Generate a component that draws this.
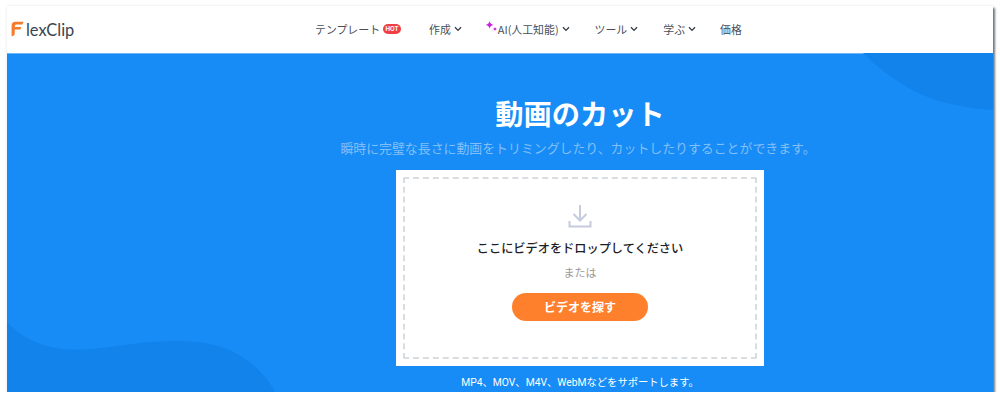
<div class="window">
  <header class="top">
    <div class="logo">
      <svg class="logo-mark" viewBox="0 0 13 16" width="13" height="16" aria-hidden="true">
        <path d="M4.5 0.8H12.6L11.4 3.6H5.6C4.6 3.6 4 4.2 3.9 5L3.8 6H10.4L9.4 8.6H3.7V12.6C3.7 14.4 2.4 15.2 0.6 15.2V4.8C0.6 2.2 2 0.8 4.5 0.8Z" fill="#f47a2c"/>
      </svg>
      <span class="logo-text">lexClip</span>
    </div>
    <nav class="nav">
      <span class="item first">テンプレート<b class="hot">HOT</b></span>
      <span class="item">作成<svg class="chev" viewBox="0 0 8 6" width="8" height="6"><path d="M1 1.2L4 4.4L7 1.2" /></svg></span>
      <span class="item ai">
        <svg class="spark" viewBox="0 0 14 12" width="14" height="12"><path d="M4.6 0C5.1 2.4 5.9 3.3 8.4 3.9C5.9 4.5 5.1 5.4 4.6 7.8C4.1 5.4 3.3 4.5 0.8 3.9C3.3 3.3 4.1 2.4 4.6 0Z" fill="#c81fd8"/><path d="M10 5.8C10.3 7.2 10.8 7.7 12.4 8C10.8 8.3 10.3 8.8 10 10.2C9.7 8.8 9.2 8.3 7.6 8C9.2 7.7 9.7 7.2 10 5.8Z" fill="#c81fd8"/></svg>AI(人工知能)<svg class="chev" viewBox="0 0 8 6" width="8" height="6"><path d="M1 1.2L4 4.4L7 1.2" /></svg></span>
      <span class="item">ツール<svg class="chev" viewBox="0 0 8 6" width="8" height="6"><path d="M1 1.2L4 4.4L7 1.2" /></svg></span>
      <span class="item">学ぶ<svg class="chev" viewBox="0 0 8 6" width="8" height="6"><path d="M1 1.2L4 4.4L7 1.2" /></svg></span>
      <span class="item last">価格</span>
    </nav>
  </header>

  <main class="hero">
    <svg class="blob blob-right" viewBox="0 0 130 60" width="130" height="60" aria-hidden="true">
      <path d="M0 0H130V57C95 55 60 46 38 30C22 20 10 10 0 0Z" />
    </svg>
    <svg class="blob blob-left" viewBox="0 0 270 70" width="270" height="70" aria-hidden="true">
      <path d="M0 0C12 13 30 24 55 27C85 30 115 22 145 20C185 17 215 20 240 38C254 49 263 60 268 70H0Z" />
    </svg>
    <div class="column">
      <h1>動画のカット</h1>
      <p class="sub">瞬時に完璧な長さに動画をトリミングしたり、カットしたりすることができます。</p>
      <section class="card">
        <div class="drop">
          <svg class="dl" viewBox="0 0 24 24" width="24" height="24" aria-hidden="true">
            <path d="M12 1V16M5.5 10L12 16.5L18.5 10M1.5 17V22.5H22.5V17" />
          </svg>
          <div class="drop-title">ここにビデオをドロップしてください</div>
          <div class="or">または</div>
          <button class="browse">ビデオを探す</button>
        </div>
      </section>
      <p class="formats">MP4、MOV、M4V、WebMなどをサポートします。</p>
    </div>
  </main>
</div>

<style>
  :global(body) {
    margin: 0;
    background: #fff;
  }
  .window {
    width: 986px;
    height: 386px;
    margin: 6px 0 0 7px;
    display: flex;
    flex-direction: column;
    overflow: hidden;
    box-shadow: 2px 2px 2px rgba(40, 50, 60, 0.65), 0 0 3px rgba(0, 0, 0, 0.1);
    font-family: "Noto Sans CJK JP", "Noto Sans", sans-serif;
  }
  .top {
    height: 47px;
    flex: none;
    background: #fff;
    display: flex;
    align-items: center;
    position: relative;
  }
  .logo {
    display: flex;
    align-items: center;
    margin-left: 4px;
    width: 304px;
  }
  .logo-mark {
    margin-top: -2px;
  }
  .logo-text {
    font-family: Lato, "Noto Sans", sans-serif;
    font-size: 16.4px;
    font-weight: 400;
    color: #3a4450;
    margin-left: 2px;
  }
  .nav {
    display: flex;
    align-items: center;
    gap: 25px;
    font-size: 10.9px;
    color: #4a4f57;
    margin-top: -1px;
  }
  .item {
    display: flex;
    align-items: center;
    white-space: nowrap;
    line-height: 18px;
  }
  .first {
    margin-right: 3px;
  }
  .ai {
    margin-left: -2px;
  }
  .last {
    margin-left: -1px;
  }
  .hot {
    margin-left: 3px;
    width: 18px;
    height: 10px;
    border-radius: 5px;
    background: #ee3f45;
    color: #fff;
    font: 700 6px/10px Inter, sans-serif;
    text-align: center;
  }
  .chev {
    margin-left: 3px;
    fill: none;
    stroke: #333a44;
    stroke-width: 1.3;
  }
  .spark {
    margin-top: -4px;
    margin-right: -1px;
  }
  .hero {
    flex: 1;
    position: relative;
    background: #178cf6;
    display: flex;
    justify-content: center;
    padding-left: 160px;
    box-shadow: inset 0 1px 0 #6db7f7;
    overflow: hidden;
  }
  .blob {
    position: absolute;
    fill: #1283ea;
  }
  .blob-right {
    top: 0;
    right: 0;
  }
  .blob-left {
    bottom: 0;
    left: 0;
  }
  .column {
    width: 500px;
    display: flex;
    flex-direction: column;
    align-items: center;
    position: relative;
  }
  h1 {
    margin: 40px 0 0;
    font-size: 28.25px;
    line-height: 40px;
    font-weight: 700;
    color: #fff;
  }
  .sub {
    margin: 5px 0 0 -4px;
    font-size: 12.9px;
    line-height: 20px;
    color: #82bff8;
    white-space: nowrap;
  }
  .card {
    margin-top: 12px;
    width: 368px;
    height: 196px;
    box-sizing: border-box;
    padding: 7px;
    background: #fff;
  }
  .drop {
    height: 100%;
    box-sizing: border-box;
    border: 2px dashed #dadde0;
    border-radius: 2px;
    display: flex;
    flex-direction: column;
    align-items: center;
  }
  .dl {
    margin-top: 25px;
    fill: none;
    stroke: #c6ccde;
    stroke-width: 2;
  }
  .drop-title {
    margin-top: 10px;
    font-size: 12.2px;
    line-height: 20px;
    font-weight: 500;
    color: #1c2026;
  }
  .or {
    margin-top: 4px;
    font-size: 11px;
    line-height: 20px;
    color: #9a9a9a;
  }
  .browse {
    margin-top: 11px;
    width: 136px;
    height: 28px;
    border: 0;
    border-radius: 14px;
    background: #ff802c;
    color: #fff;
    font: 700 12px/28px "Noto Sans CJK JP", sans-serif;
    padding: 0;
  }
  .formats {
    margin: 9px 0 0;
    font-family: Roboto, "Noto Sans CJK JP", sans-serif;
    font-size: 10.3px;
    line-height: 16px;
    color: #fff;
    white-space: nowrap;
  }
</style>
